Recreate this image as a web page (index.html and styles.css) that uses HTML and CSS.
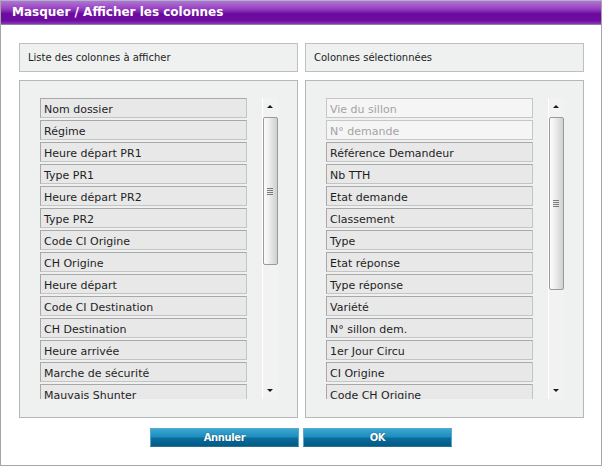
FILE: index.html
```html
<!DOCTYPE html>
<html lang="fr">
<head>
<meta charset="utf-8">
<title>Masquer / Afficher les colonnes</title>
<link rel="stylesheet" href="styles.css">
</head>
<body>
<div class="dialog">
  <div class="titlebar">Masquer / Afficher les colonnes</div>
  <div class="content">
    <div class="columns">
      <div class="column">
        <div class="header">Liste des colonnes à afficher</div>
        <div class="panel">
          <ul class="list">
            <li class="item">Nom dossier</li>
            <li class="item">Régime</li>
            <li class="item">Heure départ PR1</li>
            <li class="item">Type PR1</li>
            <li class="item">Heure départ PR2</li>
            <li class="item">Type PR2</li>
            <li class="item">Code CI Origine</li>
            <li class="item">CH Origine</li>
            <li class="item">Heure départ</li>
            <li class="item">Code CI Destination</li>
            <li class="item">CH Destination</li>
            <li class="item">Heure arrivée</li>
            <li class="item">Marche de sécurité</li>
            <li class="item">Mauvais Shunter</li>
          </ul>
          <div class="scrollbar">
            <div class="arrow up"></div>
            <div class="thumb thumb-left"><span class="grip"></span></div>
            <div class="arrow down"></div>
          </div>
        </div>
      </div>
      <div class="column">
        <div class="header">Colonnes sélectionnées</div>
        <div class="panel">
          <ul class="list">
            <li class="item disabled">Vie du sillon</li>
            <li class="item disabled">N° demande</li>
            <li class="item">Référence Demandeur</li>
            <li class="item">Nb TTH</li>
            <li class="item">Etat demande</li>
            <li class="item">Classement</li>
            <li class="item">Type</li>
            <li class="item">Etat réponse</li>
            <li class="item">Type réponse</li>
            <li class="item">Variété</li>
            <li class="item">N° sillon dem.</li>
            <li class="item">1er Jour Circu</li>
            <li class="item">CI Origine</li>
            <li class="item">Code CH Origine</li>
          </ul>
          <div class="scrollbar">
            <div class="arrow up"></div>
            <div class="thumb thumb-right"><span class="grip"></span></div>
            <div class="arrow down"></div>
          </div>
        </div>
      </div>
    </div>
    <div class="buttons">
      <button class="btn">Annuler</button>
      <button class="btn">OK</button>
    </div>
  </div>
</div>
</body>
</html>
```
FILE: styles.css
```css
html, body {
  margin: 0;
  padding: 0;
  background: #ffffff;
}
body {
  width: 602px;
  height: 467px;
  font-family: "DejaVu Sans", Verdana, sans-serif;
  font-size: 11px;
  color: #1e1e1e;
}
.dialog {
  box-sizing: border-box;
  width: 602px;
  height: 466px;
  border: 1px solid #a6a6a6;
  border-top-color: #a9b8c6;
  background: #ffffff;
}
.titlebar {
  height: 23px;
  line-height: 23px;
  padding-left: 11px;
  color: #ffffff;
  font-weight: bold;
  font-size: 12px;
  background: linear-gradient(to bottom, #b374d2 0%, #9a48c4 30%, #8326b4 45%, #6c0a9e 55%, #6e0ca0 85%, #8a38b6 100%);
  border-bottom: 1px solid #8d7fa8;
}
.content {
  padding: 18px 17px 0 18px;
}
.columns {
  display: grid;
  grid-template-columns: 279px 279px;
  column-gap: 7px;
}
.column {
  display: flex;
  flex-direction: column;
  gap: 8px;
}
.header {
  box-sizing: border-box;
  height: 29px;
  line-height: 28px;
  padding-left: 8px;
  font-size: 10px;
  background: #eff1f1;
  border: 1px solid #bcc0c0;
  color: #1e1e1e;
}
.panel {
  box-sizing: border-box;
  height: 338px;
  background: #eff1f1;
  border: 1px solid #b4b8b8;
  padding: 17px 0 0 20px;
  display: flex;
  align-items: flex-start;
  gap: 15px;
}
.list {
  list-style: none;
  margin: 0;
  padding: 0;
  width: 207px;
  height: 301px;
  overflow: hidden;
  display: flex;
  flex-direction: column;
  gap: 2px;
}
.item {
  box-sizing: border-box;
  flex: 0 0 20px;
  height: 20px;
  line-height: 17px;
  padding: 2px 0 0 3px;
  overflow: hidden;
  background: #e8e8e8;
  border: 1px solid #a8a8a8;
  border-right-color: #c4c4c4;
  border-bottom-color: #c4c4c4;
  white-space: nowrap;
}
.item.disabled {
  background: #f5f5f5;
  border-color: #c6c6c6;
  color: #a4a4a4;
}
.scrollbar {
  box-sizing: border-box;
  width: 16px;
  height: 301px;
  background: linear-gradient(to right, #ffffff 0, #ffffff 1px, #f2f2f2 1px, #f2f2f2 100%);
  display: flex;
  flex-direction: column;
  align-items: center;
}
.arrow {
  width: 0;
  height: 0;
  border-left: 3px solid transparent;
  border-right: 3px solid transparent;
}
.arrow.up {
  margin-top: 7px;
  border-bottom: 3px solid #1a1a1a;
}
.arrow.down {
  margin-top: auto;
  margin-bottom: 7px;
  border-top: 3px solid #1a1a1a;
}
.thumb {
  box-sizing: border-box;
  width: 15px;
  margin-top: 9px;
  border: 1px solid #9a9a9a;
  border-radius: 2px;
  background: linear-gradient(to right, #fbfbfb 0%, #f0f0f0 35%, #d9d9d9 80%, #cfcfcf 100%);
  display: flex;
  align-items: center;
  justify-content: center;
}
.thumb-left {
  height: 148px;
}
.thumb-right {
  height: 173px;
}
.grip {
  width: 6px;
  height: 7px;
  background: repeating-linear-gradient(to bottom, #7a7a7a 0, #7a7a7a 1px, transparent 1px, transparent 2px);
}
.buttons {
  display: flex;
  justify-content: center;
  gap: 4px;
  margin-top: 10px;
  padding-right: 1px;
}
.btn {
  box-sizing: border-box;
  width: 149px;
  height: 19px;
  padding: 0;
  border: 1px solid #5aa8c8;
  border-bottom-color: #2e6e8e;
  background: linear-gradient(to bottom, #3aa7d3 0%, #1f8dbd 45%, #0a6c9c 55%, #005a86 100%);
  color: #ffffff;
  font-family: "DejaVu Sans", Verdana, sans-serif;
  font-weight: bold;
  font-size: 10px;
  letter-spacing: -0.4px;
  text-shadow: 0 0 1px #003a5a;
  cursor: pointer;
}
```
